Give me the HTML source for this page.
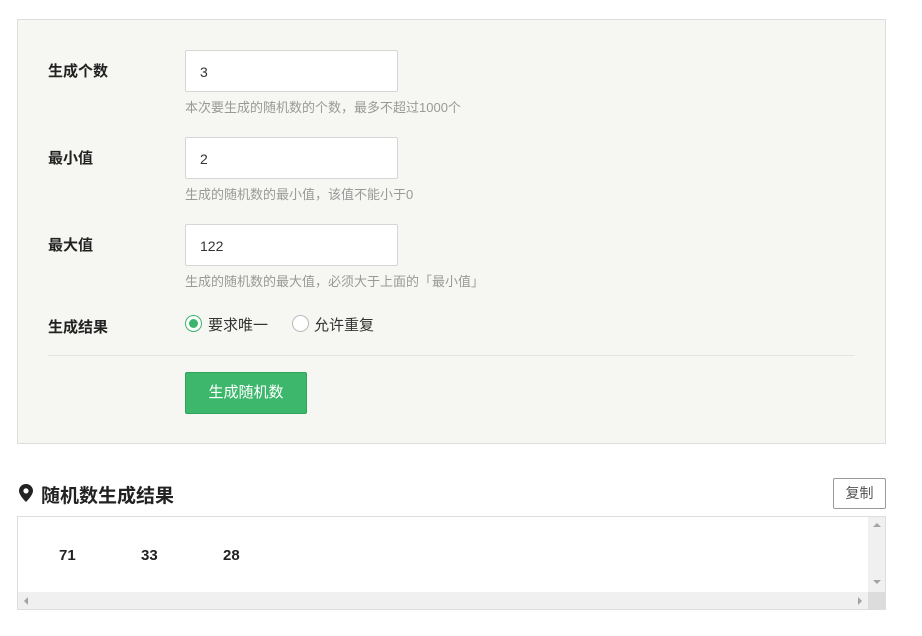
<!DOCTYPE html>
<html><head><meta charset="utf-8"><style>
*{box-sizing:border-box;margin:0;padding:0}
body{width:922px;height:636px;background:#fff;font-family:"Liberation Sans","Noto Sans CJK SC",sans-serif;color:#333;position:relative;overflow:hidden}
.abs{position:absolute}
.panel{left:17px;top:19px;width:869px;height:425px;background:#f6f6f2;border:1px solid #ddd}
.lbl{left:48px;font-size:15px;font-weight:bold;color:#222}
.inp{left:185px;width:213px;height:42px;background:#fff;border:1px solid #d6d6d6;border-radius:2px;font-size:14px;padding-left:14px;line-height:42px;color:#333}
.help{left:185px;font-size:13px;color:#999}
.radio{width:17px;height:17px;border-radius:50%;border:1px solid #bbb;background:#fff}
</style></head><body>
<div class="abs panel"></div>
<div class="abs lbl" style="top:60px">生成个数</div>
<div class="abs inp" style="top:50px">3</div>
<div class="abs help" style="top:97px">本次要生成的随机数的个数，最多不超过1000个</div>
<div class="abs lbl" style="top:147px">最小值</div>
<div class="abs inp" style="top:137px">2</div>
<div class="abs help" style="top:184px">生成的随机数的最小值，该值不能小于0</div>
<div class="abs lbl" style="top:234px">最大值</div>
<div class="abs inp" style="top:224px">122</div>
<div class="abs help" style="top:271px">生成的随机数的最大值，必须大于上面的「最小值」</div>
<div class="abs lbl" style="top:316px">生成结果</div>
<div class="abs radio" style="left:185px;top:315px;border-color:#3cb56b"><div style="width:9px;height:9px;border-radius:50%;background:#3cb56b;margin:3px"></div></div>
<div class="abs" style="left:208px;top:314px;font-size:15px;color:#333">要求唯一</div>
<div class="abs radio" style="left:292px;top:315px"></div>
<div class="abs" style="left:314px;top:314px;font-size:15px;color:#333">允许重复</div>
<div class="abs" style="left:48px;top:355px;width:807px;height:1px;background:#e4e4e4"></div>
<div class="abs" style="left:185px;top:372px;width:122px;height:42px;background:#3cb76c;border:1px solid #2ea35c;border-radius:2px;color:#fff;font-size:15px;text-align:center;line-height:40px">生成随机数</div>
<svg class="abs" style="left:19px;top:484px" width="14" height="18" viewBox="0 0 14 18"><path d="M7 0C3.1 0 0 3 0 6.8 0 11.5 7 18 7 18s7-6.5 7-11.2C14 3 10.9 0 7 0zm0 9.5A2.6 2.6 0 1 1 7 4.3a2.6 2.6 0 0 1 0 5.2z" fill="#222"/></svg>
<div class="abs" style="left:41px;top:481px;font-size:19px;font-weight:bold;color:#222">随机数生成结果</div>
<div class="abs" style="left:833px;top:478px;width:53px;height:31px;border:1px solid #999;border-radius:2px;background:#fff;font-size:14px;color:#555;text-align:center;line-height:29px">复制</div>
<div class="abs" style="left:17px;top:516px;width:869px;height:94px;border:1px solid #ddd;background:#fff"></div>
<div class="abs" style="left:59px;top:547px;font-size:15px;font-weight:bold;color:#222">71</div>
<div class="abs" style="left:141px;top:547px;font-size:15px;font-weight:bold;color:#222">33</div>
<div class="abs" style="left:223px;top:547px;font-size:15px;font-weight:bold;color:#222">28</div>
<div class="abs" style="left:868px;top:517px;width:17px;height:75px;background:#f0f0f0"></div>
<div class="abs" style="left:18px;top:592px;width:850px;height:17px;background:#f0f0f0"></div>
<div class="abs" style="left:868px;top:592px;width:17px;height:17px;background:#dcdcdc"></div>
<div class="abs" style="left:873px;top:523px;border:4px solid transparent;border-bottom-color:#a3a3a3;border-top:0"></div>
<div class="abs" style="left:873px;top:580px;border:4px solid transparent;border-top-color:#a3a3a3;border-bottom:0"></div>
<div class="abs" style="left:24px;top:597px;border:4px solid transparent;border-right-color:#a3a3a3;border-left:0"></div>
<div class="abs" style="left:858px;top:597px;border:4px solid transparent;border-left-color:#a3a3a3;border-right:0"></div>
</body></html>
